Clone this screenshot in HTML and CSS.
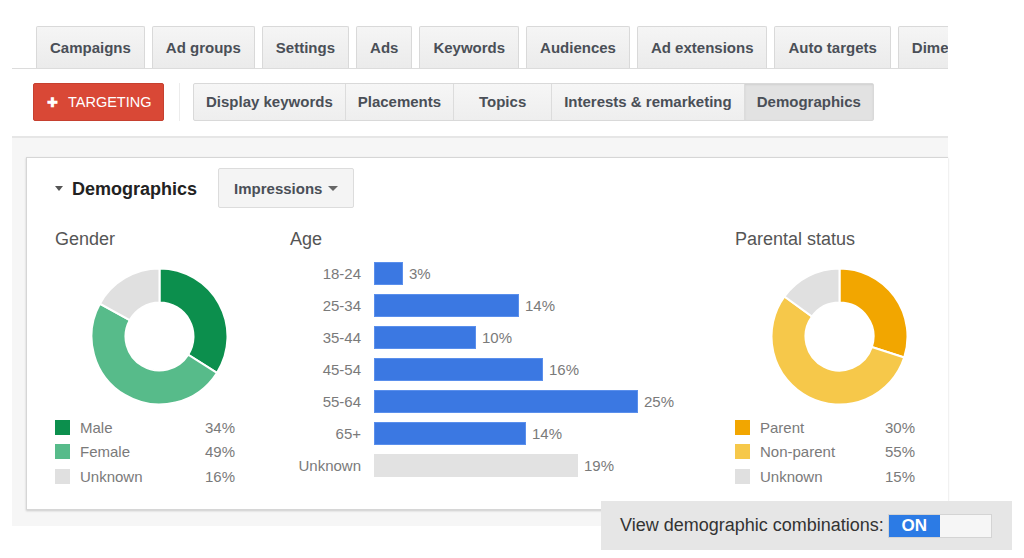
FILE: index.html
```html
<!DOCTYPE html>
<html>
<head>
<meta charset="utf-8">
<link rel="stylesheet" href="styles.css">
</head>
<body>
<div class="frame">
  <div class="tabs">
    <div class="tab">Campaigns</div>
    <div class="tab">Ad groups</div>
    <div class="tab">Settings</div>
    <div class="tab">Ads</div>
    <div class="tab">Keywords</div>
    <div class="tab">Audiences</div>
    <div class="tab">Ad extensions</div>
    <div class="tab">Auto targets</div>
    <div class="tab">Dimensions</div>
  </div>
  <div class="toolbar">
    <div class="btn-red"><span class="plus">✚</span>TARGETING</div>
    <div class="divider"></div>
    <div class="seg">
      <div class="seg-btn">Display keywords</div>
      <div class="seg-btn">Placements</div>
      <div class="seg-btn">Topics</div>
      <div class="seg-btn">Interests &amp; remarketing</div>
      <div class="seg-btn active">Demographics</div>
    </div>
  </div>
  <div class="content">
    <div class="card">
      <div class="card-head">
        <span class="caret-title"></span>
        <span class="card-title">Demographics</span>
        <div class="dropdown">Impressions<span class="caret-small"></span></div>
      </div>
      <div class="charts">
        <div class="col col-gender">
          <div class="chart-title">Gender</div>
          <div class="donut">
            <svg width="137" height="137" viewBox="0 0 137 137">
              <path class="s-male" d="M68.5 0.5 A68 68 0 0 1 125.91 104.93 L97.21 86.72 A34 34 0 0 0 68.5 34.5 Z"/>
              <path class="s-female" d="M125.91 104.93 A68 68 0 0 1 8.91 35.74 L38.71 52.12 A34 34 0 0 0 97.21 86.72 Z"/>
              <path class="s-unknown" d="M8.91 35.74 A68 68 0 0 1 68.5 0.5 L68.5 34.5 A34 34 0 0 0 38.71 52.12 Z"/>
            </svg>
          </div>
          <div class="legend">
            <div class="lg-row"><span class="sw sw-male"></span><span class="lg-name">Male</span><span class="lg-val">34%</span></div>
            <div class="lg-row"><span class="sw sw-female"></span><span class="lg-name">Female</span><span class="lg-val">49%</span></div>
            <div class="lg-row"><span class="sw sw-unknown"></span><span class="lg-name">Unknown</span><span class="lg-val">16%</span></div>
          </div>
        </div>
        <div class="col col-age">
          <div class="chart-title">Age</div>
          <div class="bars">
            <div class="bar-row"><span class="bar-label">18-24</span><span class="bar" style="width:29px"></span><span class="bar-val">3%</span></div>
            <div class="bar-row"><span class="bar-label">25-34</span><span class="bar" style="width:145px"></span><span class="bar-val">14%</span></div>
            <div class="bar-row"><span class="bar-label">35-44</span><span class="bar" style="width:102px"></span><span class="bar-val">10%</span></div>
            <div class="bar-row"><span class="bar-label">45-54</span><span class="bar" style="width:169px"></span><span class="bar-val">16%</span></div>
            <div class="bar-row"><span class="bar-label">55-64</span><span class="bar" style="width:264px"></span><span class="bar-val">25%</span></div>
            <div class="bar-row"><span class="bar-label">65+</span><span class="bar" style="width:152px"></span><span class="bar-val">14%</span></div>
            <div class="bar-row"><span class="bar-label">Unknown</span><span class="bar bar-gray" style="width:204px"></span><span class="bar-val">19%</span></div>
          </div>
        </div>
        <div class="col col-parent">
          <div class="chart-title">Parental status</div>
          <div class="donut">
            <svg width="137" height="137" viewBox="0 0 137 137">
              <path class="s-parent" d="M68.5 0.5 A68 68 0 0 1 133.17 89.51 L100.84 79.01 A34 34 0 0 0 68.5 34.5 Z"/>
              <path class="s-nonparent" d="M133.17 89.51 A68 68 0 1 1 13.49 28.53 L40.99 48.51 A34 34 0 1 0 100.84 79.01 Z"/>
              <path class="s-unknown" d="M13.49 28.53 A68 68 0 0 1 68.5 0.5 L68.5 34.5 A34 34 0 0 0 40.99 48.51 Z"/>
            </svg>
          </div>
          <div class="legend">
            <div class="lg-row"><span class="sw sw-parent"></span><span class="lg-name">Parent</span><span class="lg-val">30%</span></div>
            <div class="lg-row"><span class="sw sw-nonparent"></span><span class="lg-name">Non-parent</span><span class="lg-val">55%</span></div>
            <div class="lg-row"><span class="sw sw-unknown"></span><span class="lg-name">Unknown</span><span class="lg-val">15%</span></div>
          </div>
        </div>
      </div>
    </div>
  </div>
</div>
<div class="combo">
  <span class="combo-text">View demographic combinations:</span>
  <div class="toggle"><span class="toggle-on">ON</span><span class="toggle-off"></span></div>
</div>
</body>
</html>
```

FILE: styles.css
```css
* { box-sizing: border-box; }
body {
  margin: 0;
  background: #fff;
  font-family: "Liberation Sans", Arial, sans-serif;
  width: 1024px;
  height: 558px;
  overflow: hidden;
  position: relative;
}
.frame {
  margin-left: 12px;
  width: 936px;
  padding-top: 26px;
}
.tabs {
  display: flex;
  gap: 7px;
  padding-left: 24px;
  height: 43px;
  border-bottom: 1px solid #dcdcdc;
  overflow: hidden;
}
.tab {
  flex-shrink: 0;
  height: 42px;
  padding: 0 13px;
  display: flex;
  align-items: center;
  border: 1px solid #d9d9d9;
  border-bottom: none;
  border-radius: 2px 2px 0 0;
  background: linear-gradient(#f5f5f5, #ebebeb);
  font-weight: bold;
  font-size: 15px;
  color: #4a4f57;
}
.toolbar {
  display: flex;
  align-items: center;
  padding: 14px 0 15px 21px;
  border-bottom: 2px solid #e6e6e6;
}
.btn-red {
  height: 38px;
  width: 131px;
  display: flex;
  align-items: center;
  padding-left: 13px;
  background: #d94836;
  border: 1px solid #c6402f;
  border-radius: 2px;
  color: #fff;
  font-size: 14.5px;
}
.plus {
  font-size: 13px;
  font-weight: bold;
  margin-right: 10px;
}
.divider {
  width: 1px;
  height: 38px;
  background: #ececec;
  margin: 0 13px 0 15px;
}
.seg {
  display: flex;
  height: 38px;
  border: 1px solid #d9d9d9;
  border-radius: 2px;
  background: linear-gradient(#f6f6f6, #eeeeee);
}
.seg-btn {
  min-width: 98px;
  padding: 0 12px 2px;
  display: flex;
  align-items: center;
  justify-content: center;
  font-weight: bold;
  font-size: 15px;
  color: #4a4f57;
  border-left: 1px solid #dcdcdc;
}
.seg-btn:first-child { border-left: none; }
.seg-btn.active {
  background: #e2e2e2;
  box-shadow: inset 0 1px 2px rgba(0,0,0,0.08);
}
.content {
  background: #f6f6f6;
  padding: 19px 0 16px 14px;
}
.card {
  background: #fff;
  border: 1px solid #d6d6d6;
  border-right: none;
  box-shadow: 0 1px 2px rgba(0,0,0,0.18);
  padding: 10px 0 20px 28px;
}
.card-head {
  display: flex;
  align-items: center;
  height: 40px;
}
.caret-title {
  width: 0;
  height: 0;
  border-left: 4.5px solid transparent;
  border-right: 4.5px solid transparent;
  border-top: 5px solid #555;
  margin-right: 9px;
}
.card-title {
  font-weight: bold;
  font-size: 18px;
  color: #222;
  padding-top: 2px;
}
.dropdown {
  margin-left: 21px;
  height: 40px;
  width: 136px;
  display: flex;
  align-items: center;
  padding-left: 15px;
  border: 1px solid #dcdcdc;
  border-radius: 2px;
  background: #f4f4f4;
  font-weight: bold;
  font-size: 15px;
  color: #4a4f57;
}
.caret-small {
  width: 0;
  height: 0;
  border-left: 5px solid transparent;
  border-right: 5px solid transparent;
  border-top: 5px solid #666;
  margin-left: 6px;
}
.charts {
  display: flex;
  margin-top: 19px;
}
.col-gender { width: 235px; }
.col-age { width: 445px; }
.col-parent { width: 200px; }
.chart-title {
  font-size: 18px;
  line-height: 22px;
  padding-top: 1px;
  color: #555;
}
.donut {
  margin-top: 18px;
  padding-left: 36px;
  height: 137px;
}
.donut svg { display: block; }
.donut path { stroke: #fff; stroke-width: 2; }
.s-male { fill: #0c8f4d; }
.s-female { fill: #57bb8a; }
.s-unknown { fill: #e0e0e0; }
.s-parent { fill: #f2a600; }
.s-nonparent { fill: #f6c84a; }
.legend {
  margin-top: 10px;
  width: 180px;
}
.lg-row {
  display: flex;
  align-items: center;
  height: 24.5px;
  font-size: 15px;
  color: #7a7a7a;
}
.sw {
  width: 15px;
  height: 15px;
  margin-right: 10px;
}
.sw-male { background: #0c8f4d; }
.sw-female { background: #57bb8a; }
.sw-unknown { background: #e0e0e0; }
.sw-parent { background: #f2a600; }
.sw-nonparent { background: #f6c84a; }
.lg-name { flex: 1; }
.lg-val { text-align: right; }
.bars { margin-top: 7px; }
.bar-row {
  display: flex;
  align-items: center;
  height: 32px;
  font-size: 15px;
  color: #7a7a7a;
}
.bar-label {
  width: 71px;
  text-align: right;
  margin-right: 13px;
}
.bar {
  height: 23px;
  background: #3b78e2;
  border: 1px solid #5a8fec;
}
.bar-gray {
  background: #e2e2e2;
  border-color: #e2e2e2;
}
.bar-val { margin-left: 6px; }
.combo {
  position: absolute;
  left: 601px;
  top: 501px;
  width: 411px;
  height: 49px;
  background: #e6e6e6;
  display: flex;
  align-items: center;
  padding-left: 19px;
}
.combo-text {
  font-size: 18px;
  color: #333;
  margin-right: 4px;
}
.toggle {
  display: flex;
  width: 104px;
  height: 24px;
  border: 1px solid #d4d4d4;
  background: #f6f6f6;
}
.toggle-on {
  width: 51px;
  background: #2c7be5;
  color: #fff;
  font-weight: bold;
  font-size: 17px;
  display: flex;
  align-items: center;
  justify-content: center;
}
.toggle-off { flex: 1; }
```
